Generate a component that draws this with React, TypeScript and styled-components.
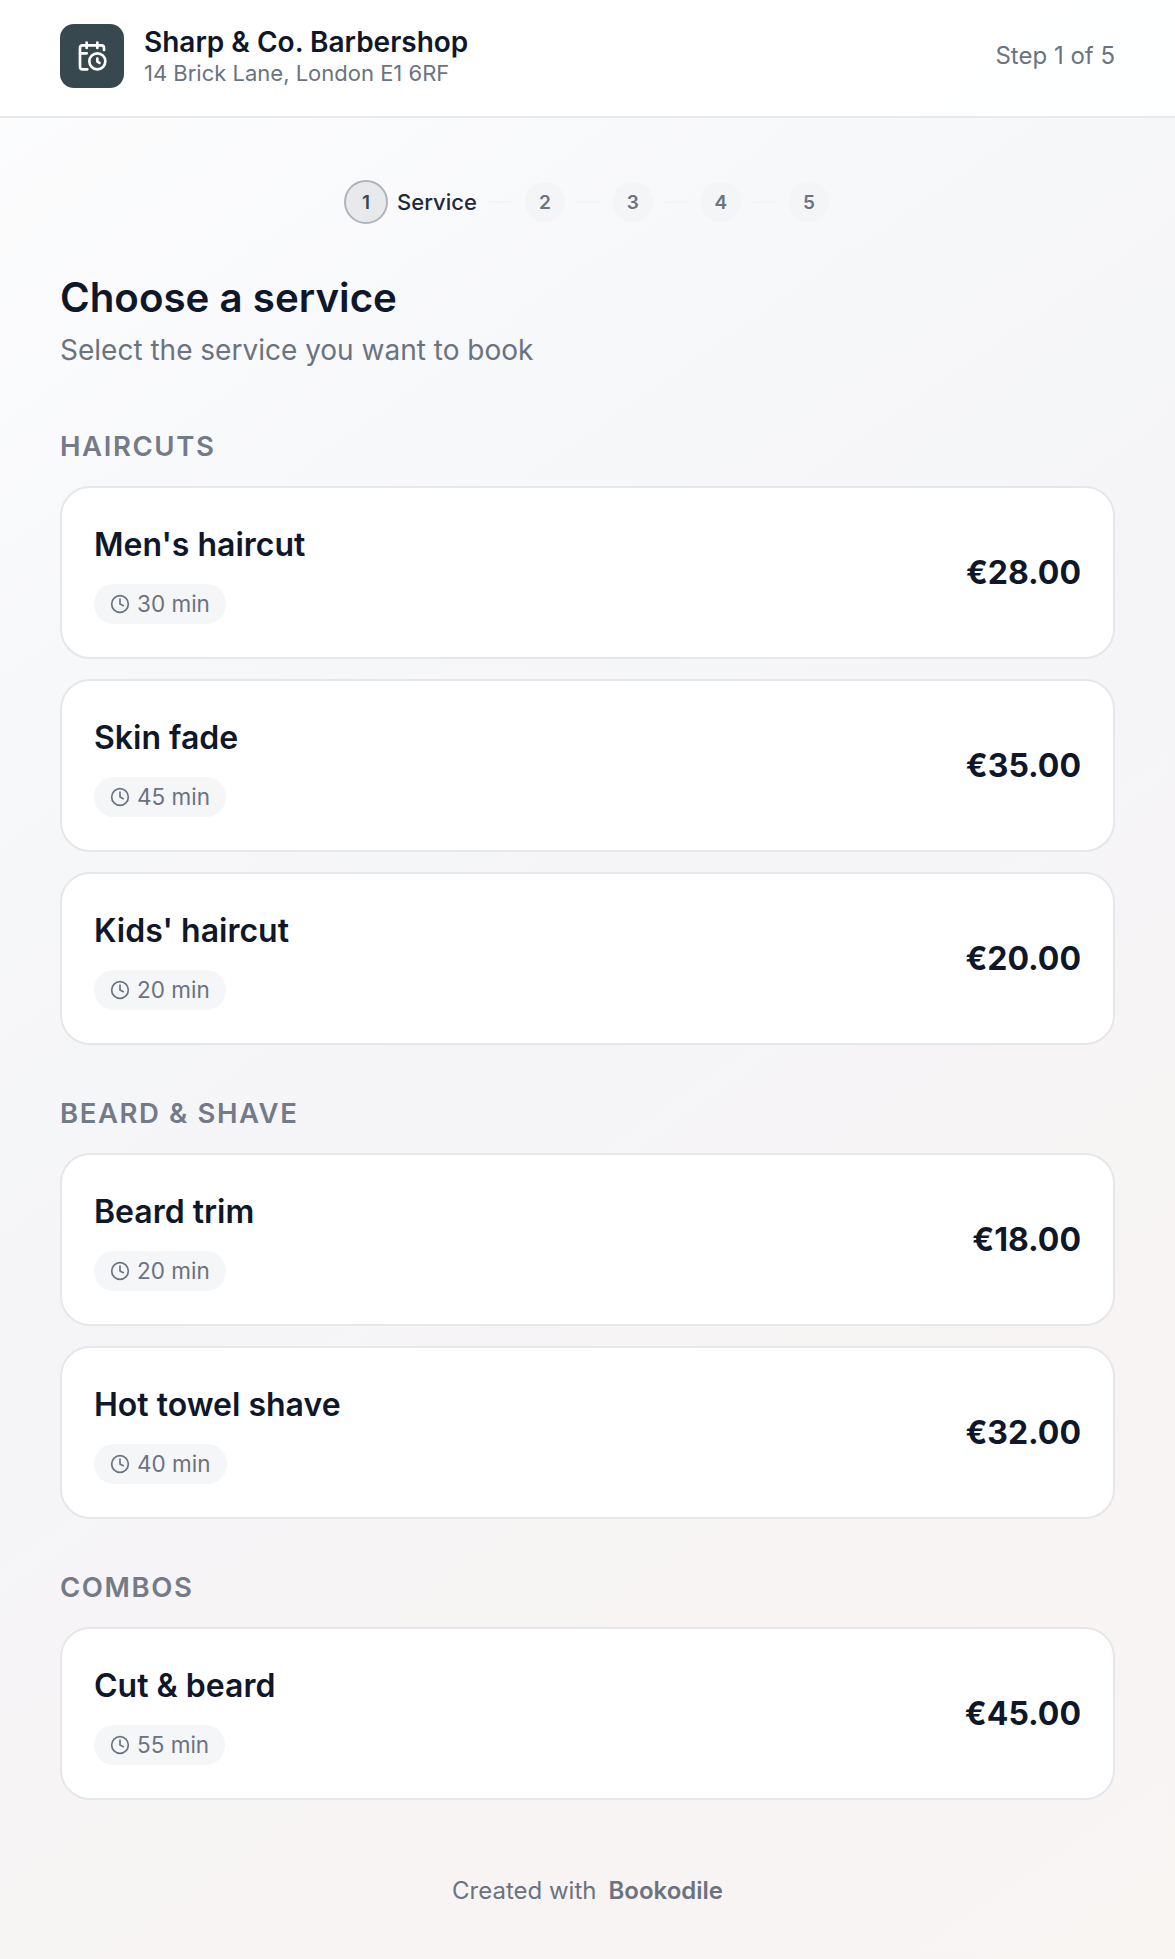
import React from "react";
import styled, { createGlobalStyle } from "styled-components";
import { CalendarClock, Clock } from "lucide-react";

const Global = createGlobalStyle`
  html, body { margin: 0; padding: 0; }
  body { font-family: Inter, "Liberation Sans", sans-serif; color: #0f172a; }
`;

const Page = styled.div`
  min-height: 1959px;
  box-sizing: border-box;
  background: linear-gradient(145deg, #fdfdfe 0%, #f7f8fa 26%, #f5f5f8 50%, #f8f4f3 78%, #f9f5f3 100%);
`;

const Header = styled.header`
  border-bottom: 2px solid #e8e9ed;
  background: rgba(255, 255, 255, 0.9);
  padding: 24px 60px 28px;
  display: flex;
  align-items: center;
  justify-content: space-between;
`;

const Brand = styled.div`
  display: flex;
  align-items: center;
  gap: 20px;
`;

const Logo = styled.div`
  width: 64px;
  height: 64px;
  border-radius: 14px;
  background: #37494f;
  color: #fff;
  display: flex;
  align-items: center;
  justify-content: center;
`;

const BrandText = styled.div`
  display: flex;
  flex-direction: column;
`;

const BrandName = styled.div`
  font-size: 28px;
  font-weight: 600;
  line-height: 32px;
  color: #0f172a;
`;

const BrandAddress = styled.div`
  margin-top: 2px;
  font-size: 22px;
  line-height: 27px;
  color: #6b7280;
`;

const StepCount = styled.div`
  padding-bottom: 2px;
  font-size: 24px;
  color: #6b7280;
`;

const Main = styled.main`
  padding: 62px 60px 0;
`;

const Stepper = styled.div`
  display: flex;
  align-items: center;
  justify-content: center;
  gap: 12px;
  height: 44px;
  padding-right: 2px;
  margin-bottom: 49px;
`;

const StepItem = styled.div`
  display: flex;
  align-items: center;
  gap: 9px;
`;

const StepDot = styled.div<{ $active?: boolean }>`
  box-sizing: border-box;
  width: ${(p) => (p.$active ? "44px" : "40px")};
  height: ${(p) => (p.$active ? "44px" : "40px")};
  border-radius: 50%;
  display: flex;
  align-items: center;
  justify-content: center;
  font-size: 19px;
  font-weight: 600;
  background: ${(p) => (p.$active ? "#e7e9ec" : "#f4f5f6")};
  border: ${(p) => (p.$active ? "2px solid #b0b3bb" : "none")};
  color: ${(p) => (p.$active ? "#37494f" : "#6b7280")};
`;

const StepLabel = styled.span`
  font-size: 22px;
  font-weight: 500;
  color: #1f2937;
`;

const Connector = styled.div`
  width: 24px;
  height: 2px;
  background: #f3f4f6;
`;

const Title = styled.h1`
  margin: 0;
  font-size: 40.3px;
  line-height: 50px;
  font-weight: 600;
  color: #0f172a;
`;

const Subtitle = styled.p`
  margin: 10px 0 0;
  font-size: 28px;
  line-height: 35px;
  color: #6b7280;
`;

const Section = styled.section`
  margin-top: 51px;

  &:first-of-type {
    margin-top: 61px;
  }
`;

const SectionTitle = styled.h2`
  margin: 0 0 23px;
  font-size: 27.5px;
  line-height: 34px;
  font-weight: 600;
  letter-spacing: 1.6px;
  color: #737a88;
`;

const Cards = styled.div`
  display: flex;
  flex-direction: column;
  gap: 20px;
`;

const Card = styled.div`
  box-sizing: border-box;
  height: 173px;
  padding: 0 32px;
  background: #fff;
  border: 2px solid #e5e7eb;
  border-radius: 30px;
  display: flex;
  align-items: center;
  justify-content: space-between;
`;

const CardInfo = styled.div`
  padding-top: 3px;
  display: flex;
  flex-direction: column;
  align-items: flex-start;
  gap: 19px;
`;

const CardName = styled.div`
  font-size: 32px;
  line-height: 40px;
  font-weight: 600;
  color: #0f172a;
`;

const Duration = styled.div`
  display: inline-flex;
  align-items: center;
  gap: 7px;
  height: 40px;
  padding: 0 16px;
  border-radius: 20px;
  background: #f5f6f7;
  font-size: 22.5px;
  color: #6b7280;
`;

const Price = styled.div`
  font-size: 32px;
  font-weight: 700;
  color: #0f172a;
`;

const Footer = styled.footer`
  margin-top: 76px;
  text-align: center;
  font-size: 24px;
  line-height: 30px;
  color: #6b7280;
`;

const FooterBrand = styled.strong`
  font-weight: 600;
  margin-left: 12px;
`;

const groups = [
  {
    title: "HAIRCUTS",
    items: [
      ["Men's haircut", "30 min", "€28.00"],
      ["Skin fade", "45 min", "€35.00"],
      ["Kids' haircut", "20 min", "€20.00"],
    ],
  },
  {
    title: "BEARD & SHAVE",
    items: [
      ["Beard trim", "20 min", "€18.00"],
      ["Hot towel shave", "40 min", "€32.00"],
    ],
  },
  { title: "COMBOS", items: [["Cut & beard", "55 min", "€45.00"]] },
];

export default function App() {
  return (
    <Page>
      <Global />
      <Header>
        <Brand>
          <Logo>
            <CalendarClock size={32} strokeWidth={2} />
          </Logo>
          <BrandText>
            <BrandName>Sharp &amp; Co. Barbershop</BrandName>
            <BrandAddress>14 Brick Lane, London E1 6RF</BrandAddress>
          </BrandText>
        </Brand>
        <StepCount>Step 1 of 5</StepCount>
      </Header>
      <Main>
        <Stepper>
          <StepItem>
            <StepDot $active>1</StepDot>
            <StepLabel>Service</StepLabel>
          </StepItem>
          {[2, 3, 4, 5].map((n) => (
            <React.Fragment key={n}>
              <Connector />
              <StepDot>{n}</StepDot>
            </React.Fragment>
          ))}
        </Stepper>
        <Title>Choose a service</Title>
        <Subtitle>Select the service you want to book</Subtitle>
        {groups.map((g) => (
          <Section key={g.title}>
            <SectionTitle>{g.title}</SectionTitle>
            <Cards>
              {g.items.map(([name, time, price]) => (
                <Card key={name}>
                  <CardInfo>
                    <CardName>{name}</CardName>
                    <Duration>
                      <Clock size={20} strokeWidth={2} />
                      {time}
                    </Duration>
                  </CardInfo>
                  <Price>{price}</Price>
                </Card>
              ))}
            </Cards>
          </Section>
        ))}
        <Footer>
          Created with<FooterBrand>Bookodile</FooterBrand>
        </Footer>
      </Main>
    </Page>
  );
}
